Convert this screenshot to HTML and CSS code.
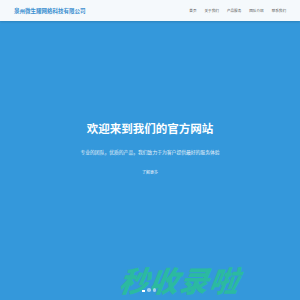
FILE: index.html
```html
<!DOCTYPE html>
<html lang="zh">
<head>
<meta charset="utf-8">
<link rel="stylesheet" href="styles.css">
</head>
<body>
<header class="topbar">
  <div class="brand">泉州微生耀网络科技有限公司</div>
  <nav class="nav">
    <span>首页</span>
    <span>关于我们</span>
    <span>产品服务</span>
    <span>团队介绍</span>
    <span>联系我们</span>
  </nav>
</header>
<main class="hero">
  <h1 class="title">欢迎来到我们的官方网站</h1>
  <p class="sub">专业的团队，优质的产品，我们致力于为客户提供最好的服务体验</p>
  <span class="btn">了解更多</span>
  <div class="mark">秒收录啦</div>
  <div class="dots"><i class="dash"></i><i class="dot"></i><i class="dot"></i></div>
</main>
</body>
</html>
```
FILE: styles.css
```css
html, body { margin: 0; padding: 0; }
body {
  width: 300px; height: 300px; overflow: hidden;
  font-family: "Noto Sans CJK SC", "Noto Sans", sans-serif;
  background: #3498db;
}
.topbar {
  height: 21px;
  background: #f5f9fc;
  display: flex;
  align-items: center;
  justify-content: space-between;
  padding: 0 14px;
  box-shadow: 0 1px 2px rgba(0,0,0,0.15);
  position: relative;
  z-index: 1;
}
.brand {
  color: #3b8fd0;
  font-size: 5.5px;
  font-weight: 700;
  line-height: 1;
  margin-top: 3px;
}
.nav {
  display: flex;
  gap: 8px;
  font-size: 3.6px;
  color: #555;
  line-height: 1;
}
.hero {
  position: relative;
  height: 279px;
  display: flex;
  flex-direction: column;
  align-items: center;
  color: #fff;
}
.title {
  margin: 99px 0 0;
  font-size: 11.5px;
  font-weight: 700;
  line-height: 16px;
}
.sub {
  margin: 12px 0 0;
  font-size: 4.8px;
  line-height: 8px;
  color: #e6f1fa;
}
.btn {
  margin-top: 13px;
  font-size: 4px;
  line-height: 6px;
  color: #e8f3fb;
}
.dots {
  position: absolute;
  left: 142px;
  top: 267px;
  display: flex;
  align-items: center;
  gap: 2px;
}
.dash { display: block; width: 3px; height: 1.5px; background: #fff; margin-top: 2px; }
.dot { display: block; width: 3.5px; height: 3.5px; border-radius: 50%; background: rgba(255,255,255,0.55); }
.mark {
  position: absolute;
  left: 120px;
  top: 240px;
  font-size: 29px;
  font-weight: 900;
  font-style: italic;
  color: #2bbaa0;
  letter-spacing: 1px;
  line-height: 36px;
  transform: skewX(-8deg);
}
```
